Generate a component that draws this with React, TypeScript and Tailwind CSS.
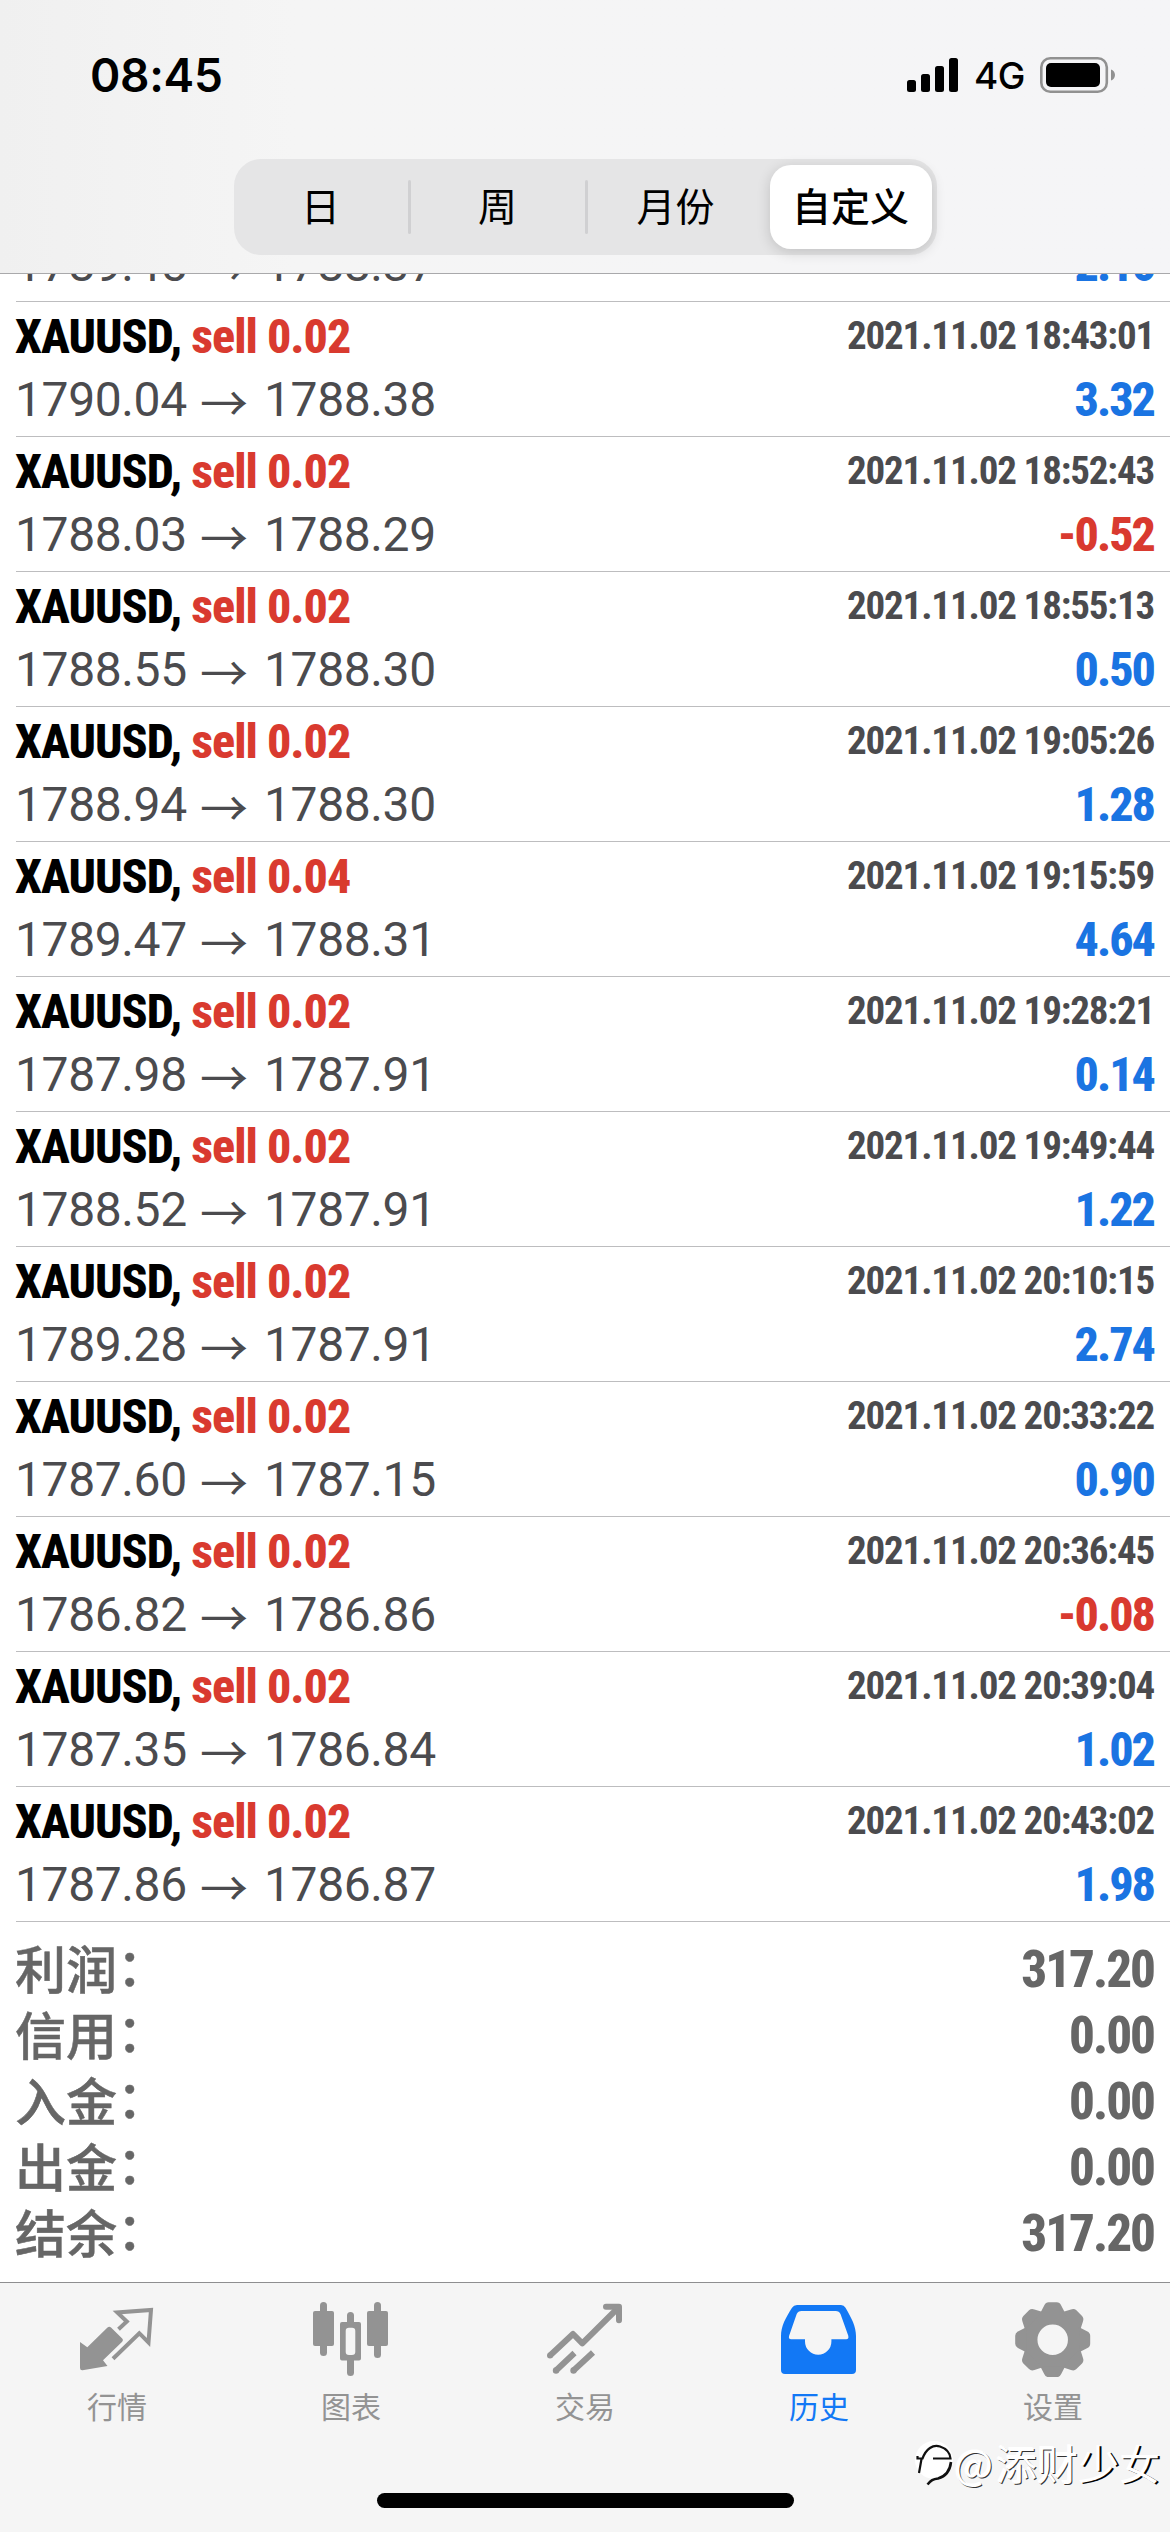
import type { ReactNode } from 'react';
import clsx from 'clsx';

interface Deal {
  symbol: string;
  volume: string;
  open: string;
  close: string;
  time: string;
  profit: string;
}

const deals: Deal[] = [
  { symbol: 'XAUUSD', volume: '0.02', open: '1790.04', close: '1788.38', time: '2021.11.02 18:43:01', profit: '3.32' },
  { symbol: 'XAUUSD', volume: '0.02', open: '1788.03', close: '1788.29', time: '2021.11.02 18:52:43', profit: '-0.52' },
  { symbol: 'XAUUSD', volume: '0.02', open: '1788.55', close: '1788.30', time: '2021.11.02 18:55:13', profit: '0.50' },
  { symbol: 'XAUUSD', volume: '0.02', open: '1788.94', close: '1788.30', time: '2021.11.02 19:05:26', profit: '1.28' },
  { symbol: 'XAUUSD', volume: '0.04', open: '1789.47', close: '1788.31', time: '2021.11.02 19:15:59', profit: '4.64' },
  { symbol: 'XAUUSD', volume: '0.02', open: '1787.98', close: '1787.91', time: '2021.11.02 19:28:21', profit: '0.14' },
  { symbol: 'XAUUSD', volume: '0.02', open: '1788.52', close: '1787.91', time: '2021.11.02 19:49:44', profit: '1.22' },
  { symbol: 'XAUUSD', volume: '0.02', open: '1789.28', close: '1787.91', time: '2021.11.02 20:10:15', profit: '2.74' },
  { symbol: 'XAUUSD', volume: '0.02', open: '1787.60', close: '1787.15', time: '2021.11.02 20:33:22', profit: '0.90' },
  { symbol: 'XAUUSD', volume: '0.02', open: '1786.82', close: '1786.86', time: '2021.11.02 20:36:45', profit: '-0.08' },
  { symbol: 'XAUUSD', volume: '0.02', open: '1787.35', close: '1786.84', time: '2021.11.02 20:39:04', profit: '1.02' },
  { symbol: 'XAUUSD', volume: '0.02', open: '1787.86', close: '1786.87', time: '2021.11.02 20:43:02', profit: '1.98' },
];

const totals = [
  { label: '利润', value: '317.20' },
  { label: '信用', value: '0.00' },
  { label: '入金', value: '0.00' },
  { label: '出金', value: '0.00' },
  { label: '结余', value: '317.20' },
];

function StatusBar() {
  return (
    <div className="flex h-[150px] items-center justify-between pr-[54px] pl-[90px]">
      <span className="font-[Inter,sans-serif] text-[46px] font-semibold tracking-[-0.3px] text-black">08:45</span>
      <div className="flex items-center">
        <svg width="52" height="36" viewBox="0 0 52 36">
          <rect x="0" y="23" width="9" height="12" rx="2.5" />
          <rect x="14" y="17" width="9" height="18" rx="2.5" />
          <rect x="28" y="9" width="9" height="26" rx="2.5" />
          <rect x="42" y="1" width="9" height="34" rx="2.5" />
        </svg>
        <span className="ml-[15px] w-[66px] font-[Inter,sans-serif] text-[37px] leading-none font-medium tracking-[-0.5px]">4G</span>
        <svg width="76" height="36" viewBox="0 0 76 36">
          <rect x="1.3" y="1.3" width="65.5" height="33.4" rx="9" fill="none" stroke="#919191" strokeWidth="2.6" />
          <rect x="6" y="6" width="54" height="24" rx="5" />
          <path d="M71 12.5C73.4 13.4 75 15.4 75 18s-1.6 4.600-4 5.500z" fill="#919191" />
        </svg>
      </div>
    </div>
  );
}

function PeriodTabs() {
  const item = 'flex items-center justify-center pb-[5px]';
  return (
    <div className="mx-auto flex h-24 w-[703px] items-center rounded-[27px] bg-[#e5e5e6] p-[5px] font-['Noto_Sans_CJK_SC',sans-serif] text-[39px] leading-none text-black">
      <div className={clsx(item, 'w-[169px] pr-[5px]')}>日</div>
      <div className="h-[54px] w-[3px] rounded-full bg-[#d0d0d2]" />
      <div className={clsx(item, 'w-[174px]')}>周</div>
      <div className="h-[54px] w-[3px] rounded-full bg-[#d0d0d2]" />
      <div className={clsx(item, 'w-[176px]')}>月份</div>
      <div className={clsx(item, 'ml-[6px] h-[84px] w-[162px] rounded-[21px] bg-white font-medium shadow-[0_3px_14px_rgba(0,0,0,0.16)]')}>
        自定义
      </div>
    </div>
  );
}

function Prices({ open, close }: { open: string; close: string }) {
  return (
    <div className="-ml-px flex font-[Roboto,sans-serif] text-[48px] leading-[62px] tracking-[-0.4px] text-[#4b4b4e]">
      <span className="w-[185px]">{open}</span>
      <span className="w-[64px] font-['Noto_Sans_CJK_SC',sans-serif]">→</span>
      <span>{close}</span>
    </div>
  );
}

function Profit({ value }: { value: string }) {
  return (
    <span
      className={clsx(
        'font-[Roboto,sans-serif] text-[48px] leading-[62px] font-extrabold tracking-[-2px] [font-stretch:75%]',
        value.startsWith('-') ? 'text-[#d93a2f]' : 'text-[#1a74e2]',
      )}
    >
      {value}
    </span>
  );
}

function DealRow({ deal }: { deal: Deal }) {
  return (
    <div className="ml-4 h-[135px] border-b border-[#bdbdbf] pt-[3px] pr-4">
      <div className="-ml-px flex h-16 justify-between font-[Roboto,sans-serif] leading-[64px] font-extrabold [font-stretch:75%]">
        <span className="text-[48px] tracking-[-1px] text-black">
          {deal.symbol}, <span className="text-[#d93a2f]">sell {deal.volume}</span>
        </span>
        <span className="text-[39px] leading-[63px] font-bold tracking-[-1.15px] text-[#4b4b4e]">{deal.time}</span>
      </div>
      <div className="flex justify-between">
        <Prices open={deal.open} close={deal.close} />
        <Profit value={deal.profit} />
      </div>
    </div>
  );
}

function QuotesIcon() {
  return (
    <svg width="76" height="76" viewBox="0 0 76 76" fill="none">
      <path
        d="M1 41l7.300 5.200L28.500 26.500q1.800-1.700 3.500 0L43.200 37.500q1.600 1.600 0 3.200L24 59.300l4.500 5.800L3.500 69.300Q1 69.500 1 67z"
        fill="currentColor"
      />
      <path d="M39.500 28.200l8.300-7.700-9.500-9 33.700-2.500-2.500 32.500-9.200-9.300L34 57.700" stroke="currentColor" strokeWidth="4" />
    </svg>
  );
}

function ChartIcon() {
  return (
    <svg width="76" height="76" viewBox="0 0 76 76" fill="currentColor">
      <rect x="0" y="10" width="21" height="35" rx="2" />
      <rect x="7" y="1" width="7" height="54" rx="3.500" />
      <path
        fillRule="evenodd"
        d="M29 21h5v-6.500a3.500 3.500 0 0 1 7 0V21h5q2 0 2 2v34.500q0 2-2 2h-5v12a3.500 3.500 0 0 1-7 0v-12h-5q-2 0-2-2V23q0-2 2-2zM36 26.700q-3.300 0-3.300 3.300v21q0 3 3.300 3h3q3.300 0 3.300-3V30q0-3.300-3.300-3.300z"
      />
      <rect x="54" y="10" width="21" height="35" rx="2" />
      <rect x="61" y="1" width="7" height="56" rx="3.500" />
    </svg>
  );
}

function TradeIcon() {
  return (
    <svg width="76" height="76" viewBox="0 0 76 76" fill="none" stroke="currentColor" strokeWidth="6">
      <path d="M3 54.500L26 33l9.300 9.300L71 7" strokeLinejoin="round" />
      <path d="M59 5.800h13v13.500" strokeLinecap="round" strokeLinejoin="round" />
      <path d="M9 69.500l18.500-17.500M26.500 69.500L46 51.500" />
      <g fill="currentColor" stroke="none">
        <circle cx="3" cy="54.500" r="3" />
        <circle cx="9" cy="69.500" r="3.200" />
        <circle cx="26.500" cy="69.500" r="3.200" />
      </g>
    </svg>
  );
}

function HistoryIcon() {
  return (
    <svg width="76" height="76" viewBox="0 0 76 76" fill="currentColor">
      <path
        fillRule="evenodd"
        d="M16 4h44q3 0 4.500 2.800C70.500 17 75 25.500 75 35v34q0 4-4 4H4q-4 0-4-4V35C0 25.500 4.500 17 11 6.800Q12.800 4 16 4zM20.500 10q-3.500 0-4.800 3L8.200 34.500q-1.200 3.800 2 3.800H24v2.200a13.200 13.200 0 0 0 26.400 0v-2.200h14.800q3 0 2-3.800L59.500 13q-1.300-3-4.800-3z"
      />
    </svg>
  );
}

function SettingsIcon() {
  const teeth = [0, 45, 90, 135, 180, 225, 270, 315];
  return (
    <svg width="76" height="76" viewBox="0 0 76 76">
      <g transform="translate(37.700 38.700)">
        <circle r="22.500" fill="none" stroke="currentColor" strokeWidth="14.500" />
        {teeth.map((angle) => (
          <path
            key={angle}
            d="M-12.500-26.500L-8.500-34.300Q-7-37.500-4-37.500H4q3 0 4.500 3.200L12.500-26.500z"
            transform={`rotate(${angle})`}
            fill="currentColor"
          />
        ))}
      </g>
    </svg>
  );
}

function TabItem({ icon, label, active }: { icon: ReactNode; label: string; active?: boolean }) {
  return (
    <div className={clsx('flex flex-1 flex-col items-center pt-[18px]', active ? 'text-[#1278f5]' : 'text-[#939393]')}>
      {icon}
      <span className="mt-[12px] font-['Noto_Sans_CJK_SC',sans-serif] text-[30px] leading-[32px]">{label}</span>
    </div>
  );
}

function Watermark() {
  return (
    <div className="absolute right-[10px] bottom-[45px] flex items-center">
      <svg width="40" height="48" viewBox="0 0 40 48" fill="none">
        <circle cx="20" cy="22" r="19" fill="#fff" />
        <path d="M3.500 18v2.500h5C12 11 19 6 26 8.500c6 2 10 6 10.500 12H19M7.500 21L5 35" stroke="#111" strokeWidth="2.200" />
        <path d="M37 24c-1 9-6 14.500-13 16.500-5 .5-7 2-10.500 6" stroke="#111" strokeWidth="2.600" />
      </svg>
      <span className="font-['Noto_Sans_CJK_SC',sans-serif] text-[41px] leading-[50px] text-white [text-shadow:1px_1px_0_#333,-1px_-1px_0_#fff]">
        <span className="mr-[3px]">@</span>添财<span className="[text-shadow:2px_1px_0_#000]">少女</span>
      </span>
    </div>
  );
}

export default function App() {
  return (
    <div className="relative flex h-[2532px] w-[1170px] flex-col overflow-hidden bg-white">
      <header className="h-[274px] shrink-0 border-b border-[#a9a9ab] bg-linear-to-r from-[#f0f0f0] via-[#f5f5f5] via-25% to-[#f5f5f7]">
        <StatusBar />
        <div className="pt-[9px]">
          <PeriodTabs />
        </div>
      </header>

      <main className="flex-1">
        {/* row scrolled under the header */}
        <div className="ml-4 flex h-7 items-end justify-between overflow-hidden border-b border-[#bdbdbf] pr-4 pb-[5px]">
          <Prices open="1789.45" close="1788.37" />
          <Profit value="2.16" />
        </div>
        {deals.map((deal) => (
          <DealRow key={deal.time} deal={deal} />
        ))}
        <div className="px-4 pt-[15px] text-[#666]">
          {totals.map((item) => (
            <div key={item.label} className="flex h-[66px] items-center justify-between">
              <span className="-ml-px flex font-['Noto_Sans_CJK_SC',sans-serif] text-[51px] leading-[60px] font-medium [-webkit-text-stroke:0.5px_#666]">
                <span className="pb-[6px]">{item.label}</span>
                <span className="-mt-[3px]">：</span>
              </span>
              <span className="font-[Roboto,sans-serif] text-[51px] leading-[66px] font-extrabold tracking-[-2px] [font-stretch:75%]">
                {item.value}
              </span>
            </div>
          ))}
        </div>
      </main>

      <footer className="flex h-[250px] shrink-0 flex-col border-t border-[#8e8e90] bg-[#f5f5f5]">
        <nav className="flex">
          <TabItem icon={<QuotesIcon />} label="行情" />
          <TabItem icon={<ChartIcon />} label="图表" />
          <TabItem icon={<TradeIcon />} label="交易" />
          <TabItem icon={<HistoryIcon />} label="历史" active />
          <TabItem icon={<SettingsIcon />} label="设置" />
        </nav>
        <div className="mx-auto mt-auto mb-6 h-[15px] w-[417px] rounded-full bg-black" />
      </footer>
      <Watermark />
    </div>
  );
}
